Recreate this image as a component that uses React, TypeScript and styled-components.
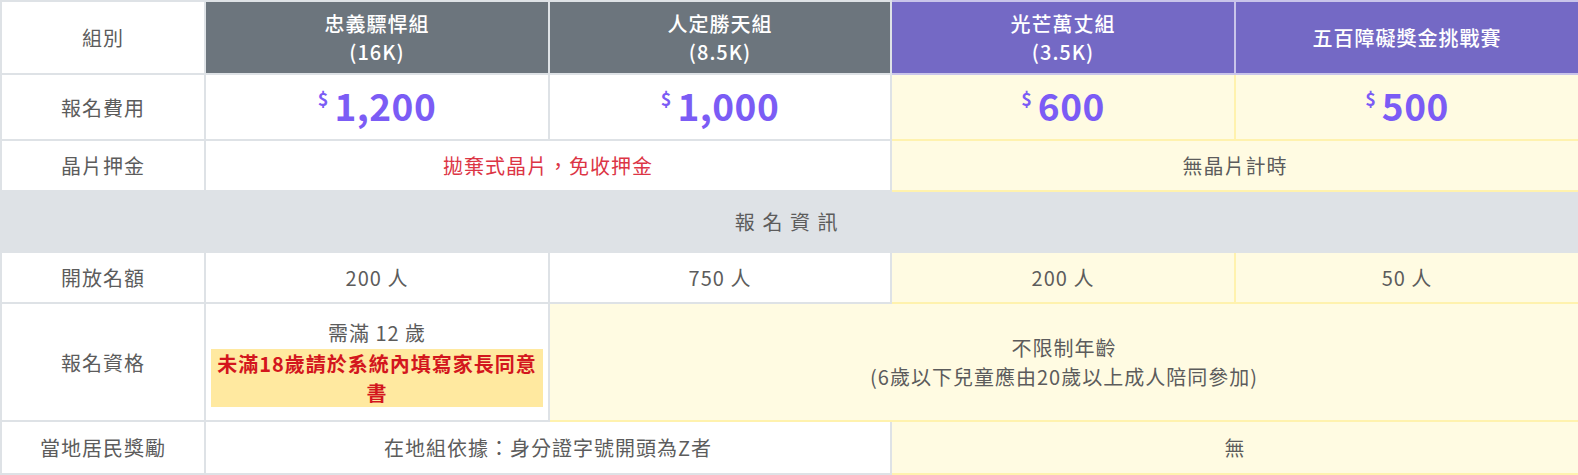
import React from "react";
import styled, { createGlobalStyle } from "styled-components";

const Global = createGlobalStyle`
  html, body { margin: 0; padding: 0; background: #fff; }
  body { font-family: "Noto Sans CJK TC", "Noto Sans", sans-serif; }
`;

const Table = styled.table`
  width: 1578px;
  border-collapse: collapse;
  table-layout: fixed;
  font-size: 20px;
  letter-spacing: 1px;
  color: #5c5c5c;
  text-align: center;
  border: 2px solid #dee2e6;
`;

const Col = styled.col<{ $w: number }>`
  width: ${(p) => p.$w}px;
`;

type Tone = "white" | "yellow" | "gray" | "purple" | "section";

const bg: Record<Tone, string> = {
  white: "#ffffff",
  yellow: "#fffbe2",
  gray: "#6c757d",
  purple: "#7469c5",
  section: "#dee2e6",
};

const borderColor: Record<Tone, string> = {
  white: "#dee2e6",
  yellow: "#fff2ae",
  gray: "#dee2e6",
  purple: "#c9c4ea",
  section: "#dee2e6",
};

const Cell = styled.td<{ $tone?: Tone }>`
  background: ${(p) => bg[p.$tone || "white"]};
  border: 2px solid ${(p) => borderColor[p.$tone || "white"]};
  padding: 0 5px;
  vertical-align: middle;
  line-height: 1.45;
`;

const Label = styled(Cell)`
  color: #5c5c5c;
`;

const Head = styled(Cell)`
  color: #ffffff;
  font-weight: 500;
  line-height: 1.4;
`;

const Row = styled.tr<{ $h: number }>`
  height: ${(p) => p.$h}px;
`;

const Price = styled.div`
  display: inline-flex;
  align-items: flex-start;
  color: #7b5cf5;
  font-weight: 700;
  letter-spacing: 0;
  padding-bottom: 3px;
`;

const Dollar = styled.span`
  font-size: 18px;
  line-height: 1;
  margin-top: 6px;
  margin-right: 6px;
`;

const Amount = styled.span`
  font-size: 37px;
  line-height: 1.2;
  letter-spacing: 0.5px;
`;

const Red = styled.span`
  color: #dc3545;
`;

const SectionTitle = styled(Cell)`
  letter-spacing: 0.38em;
  font-size: 20px;
  color: #5c5c5c;
`;

const Note = styled.div`
  background: #ffe9a0;
  color: #d3161d;
  font-weight: 700;
  padding: 0 3px;
  margin-top: 2px;
  line-height: 1.45;
`;

const Line = styled.div``;

function PriceTag({ v }: { v: string }) {
  return (
    <Price>
      <Dollar>$</Dollar>
      <Amount>{v}</Amount>
    </Price>
  );
}

export default function App() {
  return (
    <>
      <Global />
      <Table>
        <colgroup>
          <Col $w={204} />
          <Col $w={344} />
          <Col $w={342} />
          <Col $w={344} />
          <Col $w={344} />
        </colgroup>
        <tbody>
          <Row $h={73}>
            <Label>組別</Label>
            <Head $tone="gray">
              <Line>忠義驃悍組</Line>
              <Line>(16K)</Line>
            </Head>
            <Head $tone="gray">
              <Line>人定勝天組</Line>
              <Line>(8.5K)</Line>
            </Head>
            <Head $tone="purple">
              <Line>光芒萬丈組</Line>
              <Line>(3.5K)</Line>
            </Head>
            <Head $tone="purple">五百障礙獎金挑戰賽</Head>
          </Row>
          <Row $h={66}>
            <Label>報名費用</Label>
            <Cell><PriceTag v="1,200" /></Cell>
            <Cell><PriceTag v="1,000" /></Cell>
            <Cell $tone="yellow"><PriceTag v="600" /></Cell>
            <Cell $tone="yellow"><PriceTag v="500" /></Cell>
          </Row>
          <Row $h={51}>
            <Label>晶片押金</Label>
            <Cell colSpan={2}><Red>拋棄式晶片，免收押金</Red></Cell>
            <Cell $tone="yellow" colSpan={2}>無晶片計時</Cell>
          </Row>
          <Row $h={61}>
            <SectionTitle $tone="section" colSpan={5}>報名資訊</SectionTitle>
          </Row>
          <Row $h={51}>
            <Label>開放名額</Label>
            <Cell>200 人</Cell>
            <Cell>750 人</Cell>
            <Cell $tone="yellow">200 人</Cell>
            <Cell $tone="yellow">50 人</Cell>
          </Row>
          <Row $h={118}>
            <Label>報名資格</Label>
            <Cell>
              <Line>需滿 12 歲</Line>
              <Note>未滿18歲請於系統內填寫家長同意書</Note>
            </Cell>
            <Cell $tone="yellow" colSpan={3}>
              <Line>不限制年齡</Line>
              <Line>(6歲以下兒童應由20歲以上成人陪同參加)</Line>
            </Cell>
          </Row>
          <Row $h={53}>
            <Label>當地居民獎勵</Label>
            <Cell colSpan={2}>在地組依據：身分證字號開頭為Z者</Cell>
            <Cell $tone="yellow" colSpan={2}>無</Cell>
          </Row>
        </tbody>
      </Table>
    </>
  );
}
